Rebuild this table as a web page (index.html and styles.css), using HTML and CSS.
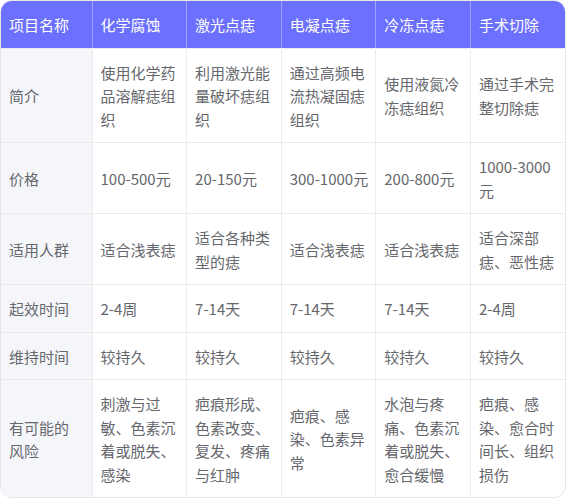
FILE: index.html
```html
<!DOCTYPE html>
<html lang="zh">
<head>
<meta charset="utf-8">
<link rel="stylesheet" href="styles.css">
</head>
<body>
<div class="wrap">
<table class="cmp">
<colgroup><col class="c-first"><col><col><col><col><col></colgroup>
<thead>
<tr><th>项目名称</th><th>化学腐蚀</th><th>激光点痣</th><th>电凝点痣</th><th>冷冻点痣</th><th>手术切除</th></tr>
</thead>
<tbody>
<tr><td>简介</td><td>使用化学药品溶解痣组织</td><td>利用激光能量破坏痣组织</td><td>通过高频电流热凝固痣组织</td><td>使用液氮冷冻痣组织</td><td>通过手术完整切除痣</td></tr>
<tr><td>价格</td><td>100-500元</td><td>20-150元</td><td>300-1000元</td><td>200-800元</td><td>1000-3000元</td></tr>
<tr><td>适用人群</td><td>适合浅表痣</td><td>适合各种类型的痣</td><td>适合浅表痣</td><td>适合浅表痣</td><td>适合深部痣、恶性痣</td></tr>
<tr><td>起效时间</td><td>2-4周</td><td>7-14天</td><td>7-14天</td><td>7-14天</td><td>2-4周</td></tr>
<tr><td>维持时间</td><td>较持久</td><td>较持久</td><td>较持久</td><td>较持久</td><td>较持久</td></tr>
<tr><td>有可能的风险</td><td>刺激与过敏、色素沉着或脱失、感染</td><td>疤痕形成、色素改变、复发、疼痛与红肿</td><td>疤痕、感染、色素异常</td><td>水泡与疼痛、色素沉着或脱失、愈合缓慢</td><td>疤痕、感染、愈合时间长、组织损伤</td></tr>
</tbody>
</table>
</div>
</body>
</html>
```

FILE: styles.css
```css
html, body {
  margin: 0;
  padding: 0;
  background: #ffffff;
}
.wrap {
  width: 566px;
  box-sizing: border-box;
  border: 1px solid #e6e7eb;
  border-radius: 12px;
  overflow: hidden;
}
.cmp {
  width: 100%;
  border-collapse: collapse;
  table-layout: fixed;
  font-family: "Noto Sans CJK SC", "Noto Sans", sans-serif;
  font-size: 15px;
  line-height: 23.5px;
}
.c-first {
  width: 91px;
}
.cmp th,
.cmp td {
  padding: 12px 5px 11px 8px;
  text-align: left;
  vertical-align: middle;
  word-break: break-all;
}
.cmp th:first-child,
.cmp td:first-child {
  padding-right: 12px;
}
.cmp th {
  background: #6c70fe;
  color: #ffffff;
  font-weight: 400;
  border-right: 1px solid rgba(255, 255, 255, 0.35);
}
.cmp td {
  color: #66676d;
  border-right: 1px solid #ebebee;
  border-top: 1px solid #ebebee;
}
.cmp th:last-child,
.cmp td:last-child {
  border-right: none;
}
.cmp td:first-child {
  background: #f5f6fa;
}
```
